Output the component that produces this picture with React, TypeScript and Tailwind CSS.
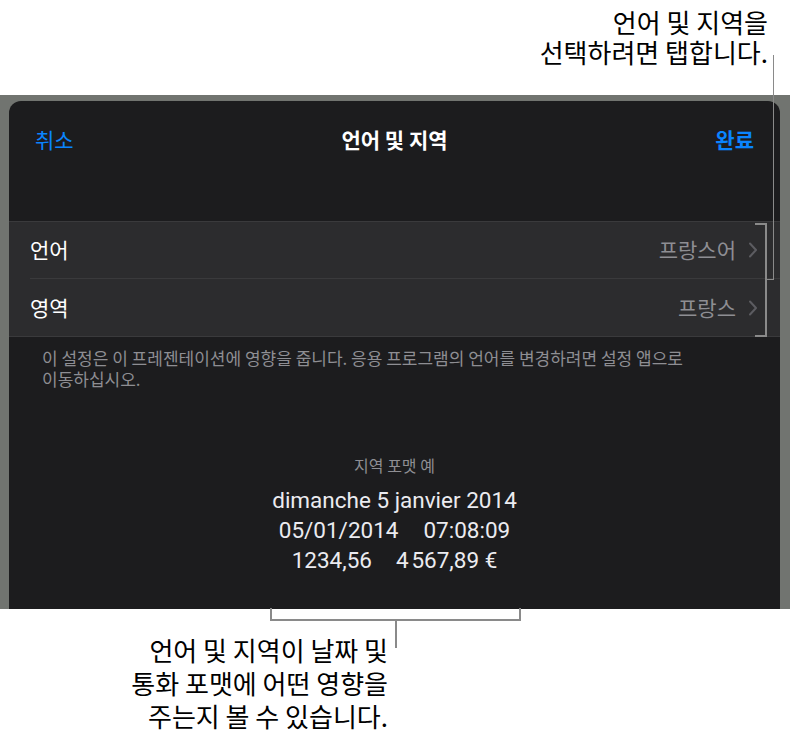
import React from "react";

const KR = { fontFamily: '"Noto Sans CJK KR", sans-serif' };

function Chevron() {
  return (
    <svg width="10" height="16" viewBox="0 0 10 16" className="ml-[12px]">
      <path d="M2 1.5 L8 8 L2 14.5" fill="none" stroke="#5c5c61" strokeWidth="2" strokeLinecap="round" strokeLinejoin="round" />
    </svg>
  );
}

export default function App() {
  return (
    <div className="relative w-[790px] h-[739px] bg-white overflow-hidden" style={KR}>
      {/* top callout */}
      <div className="h-[95px] flex flex-col items-end pr-[22px] pt-[7px] text-[26px] leading-[30px] text-black">
        <div>언어 및 지역을</div>
        <div>선택하려면 탭합니다.</div>
      </div>

      {/* device frame */}
      <div className="h-[514px] bg-[#717470] pl-[9px] pr-[10px] pt-[6px]">
        <div className="h-full bg-[#1c1c1e] rounded-t-[12px] flex flex-col">
          <div className="h-[120px]">
            <div className="h-[78px] flex items-center justify-between px-[26px] text-[21px]">
              <span className="text-[#0a84ff]">취소</span>
              <span className="text-white font-bold">언어 및 지역</span>
              <span className="text-[#0a84ff] font-bold">완료</span>
            </div>
          </div>
          <div className="bg-[#2c2c2e] border-t border-b border-[#3a3a3c]">
            <div className="h-[57px] ml-[21px] pr-[22px] flex items-center justify-between border-b border-[#3a3a3c] text-[21px]">
              <span className="text-white">언어</span>
              <span className="flex items-center text-[#8e8e93]">프랑스어<Chevron /></span>
            </div>
            <div className="h-[57px] ml-[21px] pr-[22px] flex items-center justify-between text-[21px]">
              <span className="text-white">영역</span>
              <span className="flex items-center text-[#8e8e93]">프랑스<Chevron /></span>
            </div>
          </div>
          <div className="pl-[33px] pr-[88px] pt-[10px] text-[17px] leading-[21px] text-[#8e8e93]">
            이 설정은 이 프레젠테이션에 영향을 줍니다. 응용 프로그램의 언어를 변경하려면 설정 앱으로 이동하십시오.
          </div>
          <div className="mt-[66px] flex flex-col items-center">
            <div className="text-[16px] leading-[20px] text-[#8e8e93]">지역 포맷 예</div>
            <div
              className="mt-[10px] flex flex-col items-center text-[22.5px] leading-[30px] text-[#ebebf0]"
              style={{ fontFamily: 'Roboto, "Noto Sans CJK KR", sans-serif' }}
            >
              <div>dimanche 5 janvier 2014</div>
              <div className="flex gap-[25px]"><span>05/01/2014</span><span>07:08:09</span></div>
              <div className="flex gap-[24px]"><span>1234,56</span><span>4{"\u202F"}567,89 €</span></div>
            </div>
          </div>
        </div>
      </div>

      {/* bottom callout */}
      <div className="w-[388px] pt-[24px] flex flex-col items-end text-[26px] leading-[33px] text-black">
        <div>언어 및 지역이 날짜 및</div>
        <div>통화 포맷에 어떤 영향을</div>
        <div>주는지 볼 수 있습니다.</div>
      </div>

      {/* callout lines (overlay) */}
      <div className="absolute left-[773px] top-[55px] w-px h-[224px] bg-[#8a8a8a]" />
      <div className="absolute left-[766px] top-[279px] w-[8px] h-px bg-[#8a8a8a]" />
      <div className="absolute left-[755px] top-[223px] w-[12px] h-[114px] border-t-2 border-r-2 border-b-2 border-[#8a8a8a]" />
      <div className="absolute left-[270px] top-[608px] w-[251px] h-[13px] border-l-2 border-r-2 border-b-2 border-[#8a8a8a]" />
      <div className="absolute left-[395px] top-[620px] w-[2px] h-[28px] bg-[#8a8a8a]" />
    </div>
  );
}
